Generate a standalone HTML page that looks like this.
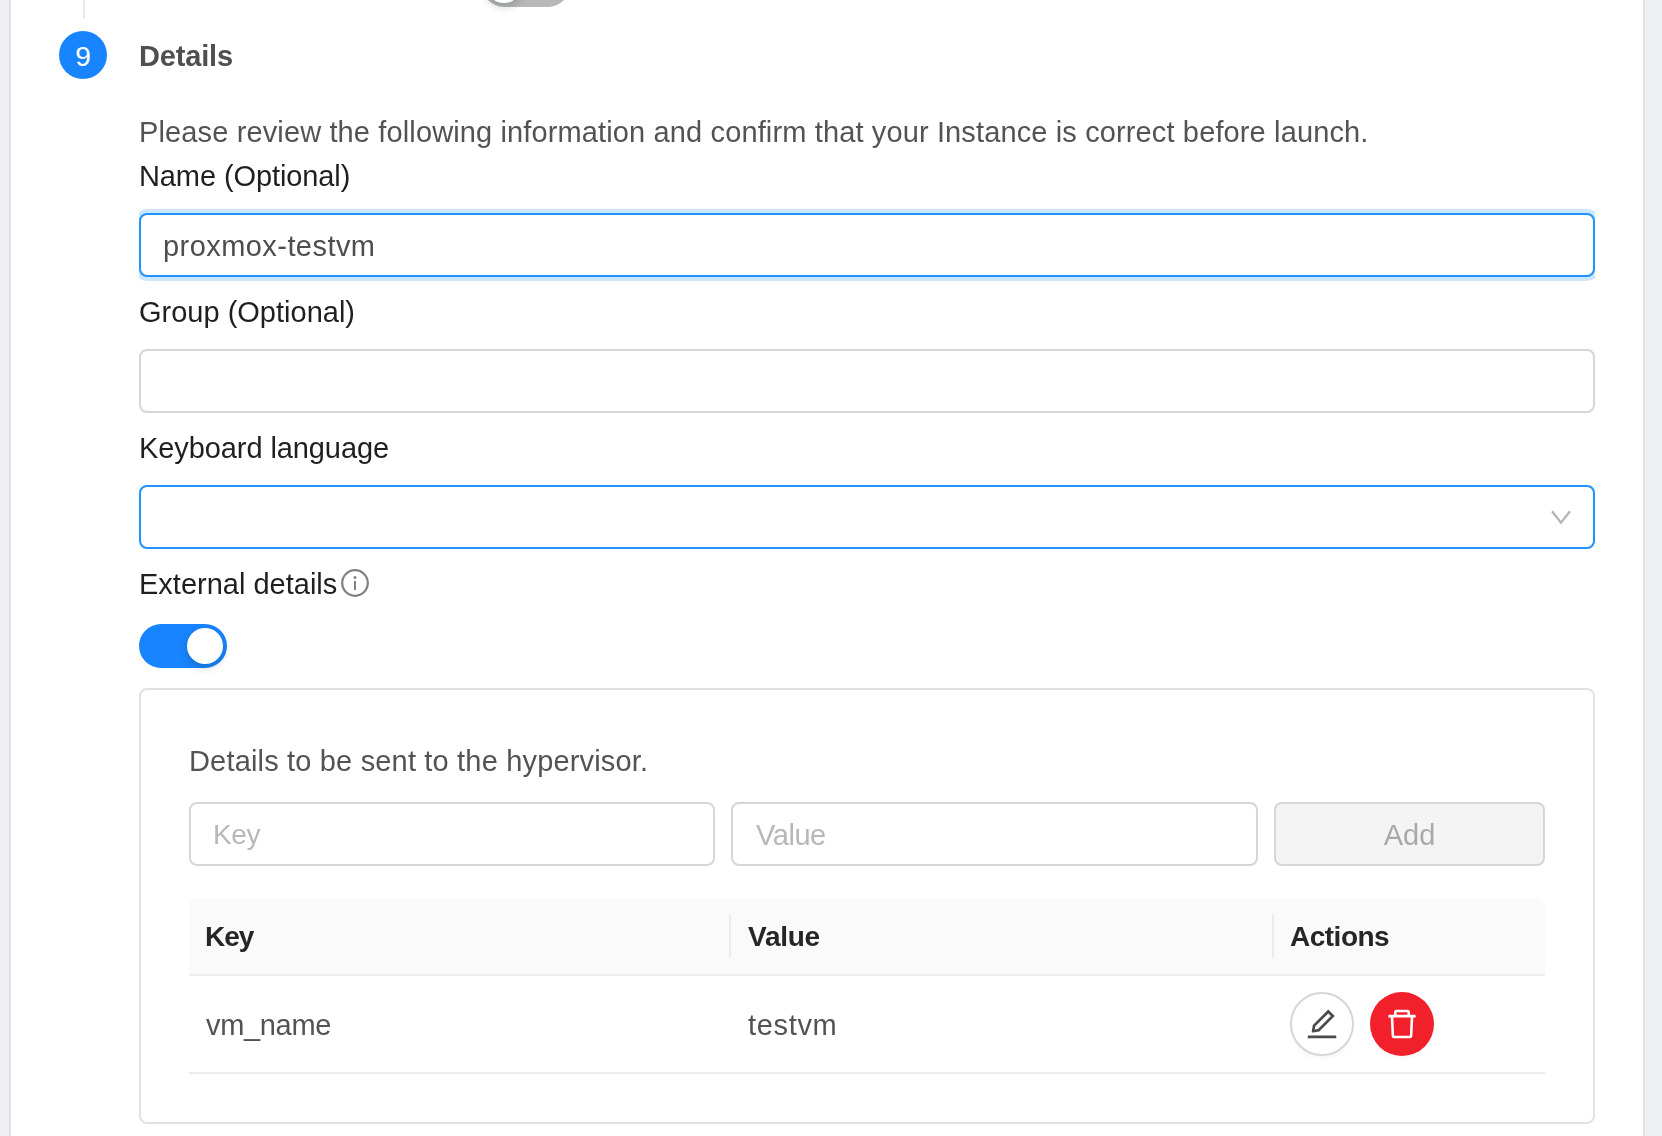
<!DOCTYPE html>
<html>
<head>
<meta charset="utf-8">
<style>
html,body{margin:0;padding:0;}
body{width:1662px;height:1136px;overflow:hidden;background:#eff0f4;position:relative;font-family:"Liberation Sans",sans-serif;}
.card{position:absolute;left:9px;top:-20px;width:1632px;height:1200px;background:#fff;border-left:2px solid #e2e2e2;border-right:2px solid #e2e2e2;}
.abs{position:absolute;}
.t{position:absolute;filter:grayscale(1);font-size:29px;line-height:44px;white-space:nowrap;}
.lbl{color:#1f1f1f;}
.desc{color:#535353;}
.inp{position:absolute;box-sizing:border-box;border:2px solid #d6d6d6;border-radius:8px;background:#fff;}
.sw{position:absolute;width:88px;height:44px;border-radius:22px;}
.knob{position:absolute;width:36px;height:36px;border-radius:50%;background:#fff;box-shadow:0 4px 8px 0 rgba(0,35,11,.2);}
</style>
</head>
<body>
<div class="card"></div>

<!-- step connector line -->
<div class="abs" style="left:83px;top:0;width:2px;height:19px;background:#e9e9e9;"></div>
<!-- top toggle (unchecked, cut off) -->
<div class="sw" style="left:482px;top:-37px;background:#b8b8b8;"><div class="knob" style="left:4px;top:4px;"></div></div>

<!-- step circle -->
<div class="abs" style="left:59px;top:31px;width:48px;height:48px;border-radius:50%;background:#1884ff;color:#fff;font-size:28px;line-height:52px;text-align:center;">9</div>
<div class="t" style="left:139px;top:34px;font-weight:bold;color:#4f4f4f;letter-spacing:-0.17px;">Details</div>

<div class="t desc" style="left:139px;top:110px;letter-spacing:0.13px;">Please review the following information and confirm that your Instance is correct before launch.</div>

<div class="t lbl" style="left:139px;top:154px;letter-spacing:-0.1px;">Name (Optional)</div>
<div class="abs" style="left:139px;top:205px;width:1456px;height:80px;overflow:hidden;">
  <div class="inp" style="left:0;top:8px;width:1456px;height:64px;border-color:#1f93ff;box-shadow:0 0 0 4px #cce6fe;"></div>
</div>
<div class="t" style="left:163px;top:224px;color:#4e4e4e;letter-spacing:0.44px;">proxmox-testvm</div>

<div class="t lbl" style="left:139px;top:290px;letter-spacing:0px;">Group (Optional)</div>
<div class="inp" style="left:139px;top:349px;width:1456px;height:64px;"></div>

<div class="t lbl" style="left:139px;top:426px;letter-spacing:-0.09px;">Keyboard language</div>
<div class="inp" style="left:139px;top:485px;width:1456px;height:64px;border-color:#1f93ff;"></div>
<svg class="abs" style="left:1549px;top:506px;" width="24" height="22" viewBox="0 0 24 22"><polyline points="3,5.2 12,16.6 21,5.2" fill="none" stroke="#b3b3b3" stroke-width="2.2"/></svg>

<div class="t lbl" style="left:139px;top:562px;letter-spacing:0px;">External details</div>
<svg class="abs" style="left:341px;top:569px;" width="28" height="28" viewBox="0 0 28 28"><circle cx="14" cy="14" r="12.8" fill="none" stroke="#808080" stroke-width="2.2"/><circle cx="14" cy="8.5" r="1.5" fill="#808080"/><rect x="13" y="12" width="2" height="9" fill="#808080"/></svg>

<div class="sw" style="left:139px;top:624px;background:#1884ff;"><div class="knob" style="left:48px;top:4px;"></div></div>

<!-- details box -->
<div class="inp" style="left:139px;top:688px;width:1456px;height:436px;border-color:#e2e2e2;"></div>
<div class="t desc" style="left:189px;top:739px;letter-spacing:0.17px;">Details to be sent to the hypervisor.</div>

<div class="inp" style="left:189px;top:802px;width:526px;height:64px;"></div>
<div class="t" style="left:213px;top:813px;color:#b8b8b8;letter-spacing:-0.35px;font-size:28px;">Key</div>
<div class="inp" style="left:731px;top:802px;width:527px;height:64px;"></div>
<div class="t" style="left:756px;top:813px;color:#b8b8b8;letter-spacing:-0.45px;">Value</div>
<div class="inp" style="left:1274px;top:802px;width:271px;height:64px;background:#f4f4f4;"></div>
<div class="t" style="left:1274px;top:813px;width:271px;text-align:center;color:#a9a9a9;letter-spacing:0px;">Add</div>

<!-- table -->
<div class="abs" style="left:189px;top:898px;width:1356px;height:76px;background:#fafafa;border-radius:8px 8px 0 0;border-bottom:2px solid #ededed;"></div>
<div class="abs" style="left:729px;top:914px;width:2px;height:44px;background:#ebebeb;"></div>
<div class="abs" style="left:1272px;top:914px;width:2px;height:44px;background:#ebebeb;"></div>
<div class="t" style="left:205px;top:915px;font-weight:bold;color:#262626;letter-spacing:-1px;font-size:28px;">Key</div>
<div class="t" style="left:748px;top:915px;font-weight:bold;color:#262626;letter-spacing:-0.25px;font-size:28px;">Value</div>
<div class="t" style="left:1290px;top:915px;font-weight:bold;color:#262626;letter-spacing:-0.5px;font-size:28px;">Actions</div>

<div class="t" style="left:206px;top:1003px;color:#535353;letter-spacing:-0.33px;">vm_name</div>
<div class="t" style="left:748px;top:1003px;color:#535353;letter-spacing:0.66px;">testvm</div>
<div class="abs" style="left:189px;top:1072px;width:1356px;height:2px;background:#ededed;"></div>

<!-- action buttons -->
<div class="abs" style="left:1290px;top:992px;width:64px;height:64px;box-sizing:border-box;border:2px solid #d6d6d6;border-radius:50%;background:#fff;box-shadow:0 4px 0 rgba(0,0,0,.02);"></div>
<svg class="abs" style="left:1306px;top:1008px;" width="32" height="32" viewBox="64 64 896 896"><path fill="#4b4b4b" d="M257.7 752c2 0 4-.2 6-.5L431.9 722c2-.4 3.9-1.3 5.3-2.8l423.9-423.9a9.96 9.96 0 000-14.1L694.9 114.9c-1.9-1.9-4.4-2.9-7.1-2.9s-5.2 1-7.1 2.9L256.8 538.8c-1.5 1.5-2.4 3.3-2.8 5.3l-29.5 168.2a33.5 33.5 0 009.4 29.8c6.6 6.4 14.9 9.9 23.8 9.9zm67.4-174.4L687.8 215l73.3 73.3-362.7 362.6-88.9 15.7 15.6-89zM880 836H144c-17.7 0-32 14.300-32 32v36c0 4.4 3.6 8 8 8h784c4.4 0 8-3.6 8-8v-36c0-17.7-14.3-32-32-32z"/></svg>
<div class="abs" style="left:1370px;top:992px;width:64px;height:64px;border-radius:50%;background:#f2202b;box-shadow:0 4px 0 rgba(0,0,0,.02);"></div>
<svg class="abs" style="left:1386px;top:1008px;" width="32" height="32" viewBox="64 64 896 896"><path fill="#fff" d="M360 184h-8c4.4 0 8-3.6 8-8v8h304v-8c0 4.4 3.6 8 8 8h-8v72h72v-80c0-35.3-28.7-64-64-64H352c-35.3 0-64 28.7-64 64v80h72v-72zm504 72H160c-17.7 0-32 14.3-32 32v32c0 4.4 3.6 8 8 8h60.4l24.7 523c1.6 34.1 29.8 61 63.9 61h454c34.2 0 62.3-26.8 63.9-61l24.7-523H888c4.4 0 8-3.6 8-8v-32c0-17.7-14.3-32-32-32zM731.3 840H292.7l-24.2-512h487l-24.2 512z"/></svg>

</body>
</html>
